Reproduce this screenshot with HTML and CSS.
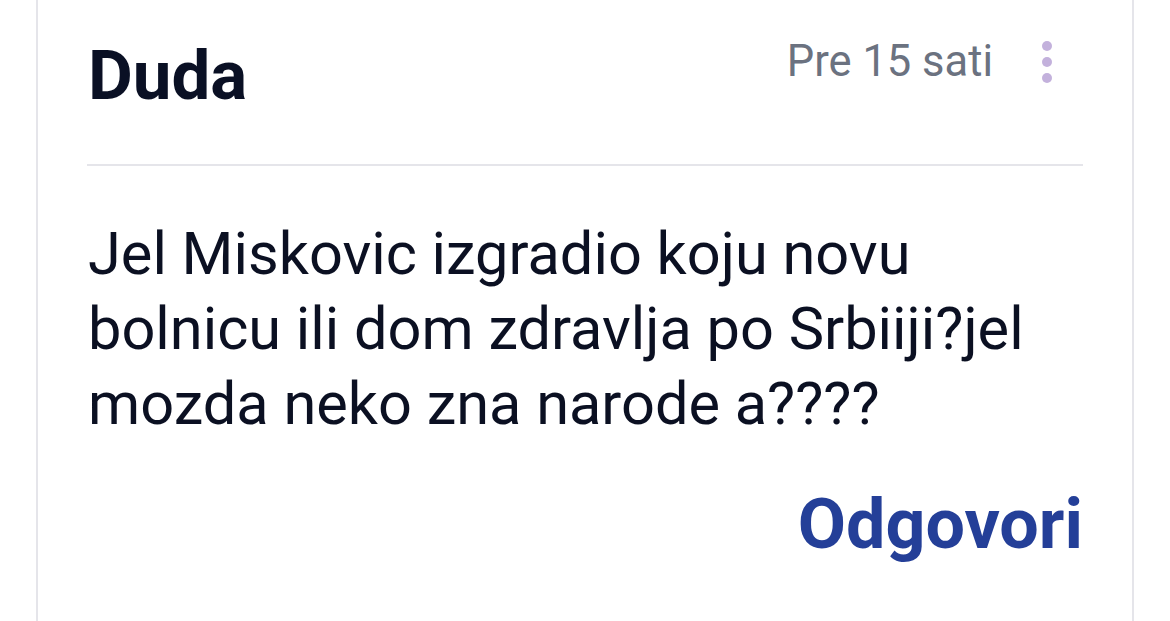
FILE: index.html
```html
<!DOCTYPE html>
<html lang="sr">
<head>
<meta charset="utf-8">
<title>Komentar</title>
<link rel="stylesheet" href="styles.css">
</head>
<body>
<article class="card">
  <header class="head">
    <h2 class="name">Duda</h2>
    <div class="meta">
      <span class="time">Pre 15 sati</span>
      <button class="more" aria-label="Opcije">
        <span class="dot"></span><span class="dot"></span><span class="dot"></span>
      </button>
    </div>
  </header>
  <hr class="divider">
  <p class="text">Jel Miskovic izgradio koju novu bolnicu ili dom zdravlja po Srbiiji?jel mozda neko zna narode a????</p>
  <div class="actions">
    <a class="reply" href="#">Odgovori</a>
  </div>
</article>
</body>
</html>
```
FILE: styles.css
```css
html, body {
  margin: 0;
  padding: 0;
  background: #ffffff;
}
body {
  font-family: Roboto, "Liberation Sans", sans-serif;
  overflow: hidden;
}
.card {
  box-sizing: border-box;
  margin-left: 36px;
  width: 1098px;
  height: 621px;
  border-left: 2px solid #e5e5ea;
  border-right: 2px solid #e5e5ea;
  padding: 36px 49px 0 50px;
}
.head {
  display: flex;
  justify-content: space-between;
  align-items: flex-start;
}
.name {
  margin: 0;
  font-size: 69px;
  line-height: 80px;
  font-weight: 700;
  color: #0a1024;
}
.meta {
  display: flex;
  align-items: flex-start;
  gap: 18px;
}
.time {
  font-size: 43.5px;
  line-height: 52px;
  color: #6b7280;
}
.more {
  width: 72px;
  height: 52px;
  padding: 0;
  border: 0;
  background: none;
  display: flex;
  flex-direction: column;
  align-items: center;
  justify-content: center;
  gap: 6px;
}
.dot {
  width: 10px;
  height: 10px;
  border-radius: 50%;
  background: #c3b1dc;
}
.divider {
  margin: 48px 0 0 -1px;
  border: 0;
  height: 2px;
  background: #e5e5ea;
}
.text {
  margin: 51px 0 0 0;
  font-size: 59.5px;
  line-height: 75px;
  color: #0b1022;
}
.actions {
  display: flex;
  justify-content: flex-end;
  margin-top: 42px;
}
.reply {
  font-size: 70px;
  line-height: 80px;
  font-weight: 700;
  color: #243f98;
  text-decoration: none;
}
```
